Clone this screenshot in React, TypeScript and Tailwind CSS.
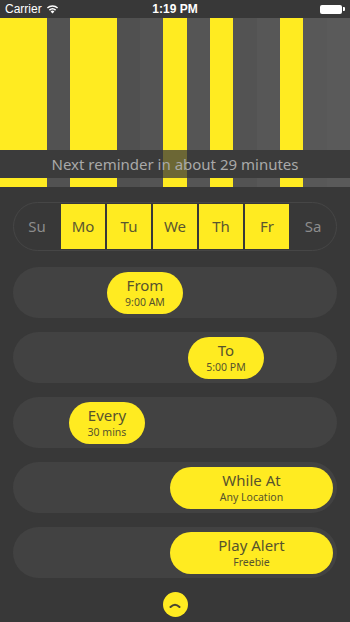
import React from 'react'

const Y = 'bg-[#ffeb21]'

// 15 columns of the day timeline, true = active slot
const slots = [
  { on: true, g: '' },
  { on: true, g: '' },
  { on: false, g: 'bg-[#525252]' },
  { on: true, g: '' },
  { on: true, g: '' },
  { on: false, g: 'bg-[#505050]' },
  { on: false, g: 'bg-[#545454]' },
  { on: true, g: '' },
  { on: false, g: 'bg-[#555555]' },
  { on: true, g: '' },
  { on: false, g: 'bg-[#535353]' },
  { on: false, g: 'bg-[#575757]' },
  { on: true, g: '' },
  { on: false, g: 'bg-[#585858]' },
  { on: false, g: 'bg-[#5a5a5a]' },
]

const days = [
  { d: 'Su', on: false },
  { d: 'Mo', on: true },
  { d: 'Tu', on: true },
  { d: 'We', on: true },
  { d: 'Th', on: true },
  { d: 'Fr', on: true },
  { d: 'Sa', on: false },
]

function Wifi() {
  return (
    <svg width="13" height="10" viewBox="0 0 13 10" className="ml-[4px]">
      <path d="M6.5 9.5 L4.6 7.4 A2.8 2.8 0 0 1 8.4 7.4 Z" fill="white" />
      <path d="M3.4 6.1 A4.6 4.6 0 0 1 9.6 6.1" stroke="white" strokeWidth="1.5" fill="none" />
      <path d="M1.4 4 A7.4 7.4 0 0 1 11.6 4" stroke="white" strokeWidth="1.5" fill="none" />
    </svg>
  )
}

function Battery() {
  return (
    <div className="flex items-center">
      <div className="w-[22px] h-[9px] rounded-[2px] bg-white" />
      <div className="w-[1.5px] h-[4px] bg-white ml-[1px] rounded-r-[1px]" />
    </div>
  )
}

function Row({ title, sub, offset, wide }: { title: string; sub: string; offset: string; wide?: boolean }) {
  return (
    <div className="h-[51px] rounded-full bg-[#424242] flex items-center">
      <div
        className={`${Y} ${offset} ${wide ? 'w-[163px]' : 'w-[76px]'} h-[42px] rounded-full flex flex-col items-center justify-center text-[#57532d]`}
      >
        <span className="text-[15px] leading-[18px]">{title}</span>
        <span className="text-[10.5px] leading-[14px] mt-[1px]">{sub}</span>
      </div>
    </div>
  )
}

export default function App() {
  return (
    <div
      className="w-[350px] h-[622px] bg-[#383838] flex flex-col overflow-hidden"
      style={{ fontFamily: '"Noto Sans", "Open Sans", sans-serif' }}
    >
      {/* status bar */}
      <div
        className="h-[18px] px-[5px] flex items-center justify-between text-white text-[12px]"
        style={{ fontFamily: '"Liberation Sans", Arial, sans-serif' }}
      >
        <div className="flex items-center w-[80px]">
          <span>Carrier</span>
          <Wifi />
        </div>
        <span className="font-bold">1:19 PM</span>
        <div className="w-[80px] flex justify-end">
          <Battery />
        </div>
      </div>

      {/* timeline */}
      <div className="relative h-[169px] flex">
        {slots.map((s, i) => (
          <div key={i} className={`flex-1 ${s.on ? Y : s.g}`} />
        ))}
        <div className="absolute left-0 right-0 top-[132px] h-[28px] bg-[#3b3b3b] flex items-center justify-center">
          <div className="absolute top-0 bottom-0 left-[163.3px] w-[23.4px] bg-[#ffeb21]/25" />
          <span className="relative text-[15px] text-[#a9a9a9]">Next reminder in about 29 minutes</span>
        </div>
      </div>

      {/* days */}
      <div className="mt-[15px] mx-[13px] h-[49px] rounded-full border border-[#464646] px-[1px] flex items-center gap-[2px]">
        {days.map((d) => (
          <div
            key={d.d}
            className={`w-[44px] h-[45px] flex items-center justify-center text-[15px] ${
              d.on ? `${Y} text-[#5a5630]` : 'text-[#8c8c8c]'
            }`}
          >
            {d.d}
          </div>
        ))}
      </div>

      {/* settings */}
      <div className="mt-[16px] mx-[13px] flex flex-col gap-[14px]">
        <Row title="From" sub="9:00 AM" offset="ml-[94px]" />
        <Row title="To" sub="5:00 PM" offset="ml-[175px]" />
        <Row title="Every" sub="30 mins" offset="ml-[56px]" />
        <Row title="While At" sub="Any Location" offset="ml-[157px]" wide />
        <Row title="Play Alert" sub="Freebie" offset="ml-[157px]" wide />
      </div>

      {/* collapse */}
      <div className="mt-[14px] flex justify-center">
        <div className={`${Y} w-[25px] h-[25px] rounded-full flex items-center justify-center`}>
          <svg width="12" height="6" viewBox="0 0 12 6">
            <path d="M1.5 5 Q6 0.5 10.5 5" stroke="#4a4630" strokeWidth="2" fill="none" strokeLinecap="round" />
          </svg>
        </div>
      </div>
    </div>
  )
}
